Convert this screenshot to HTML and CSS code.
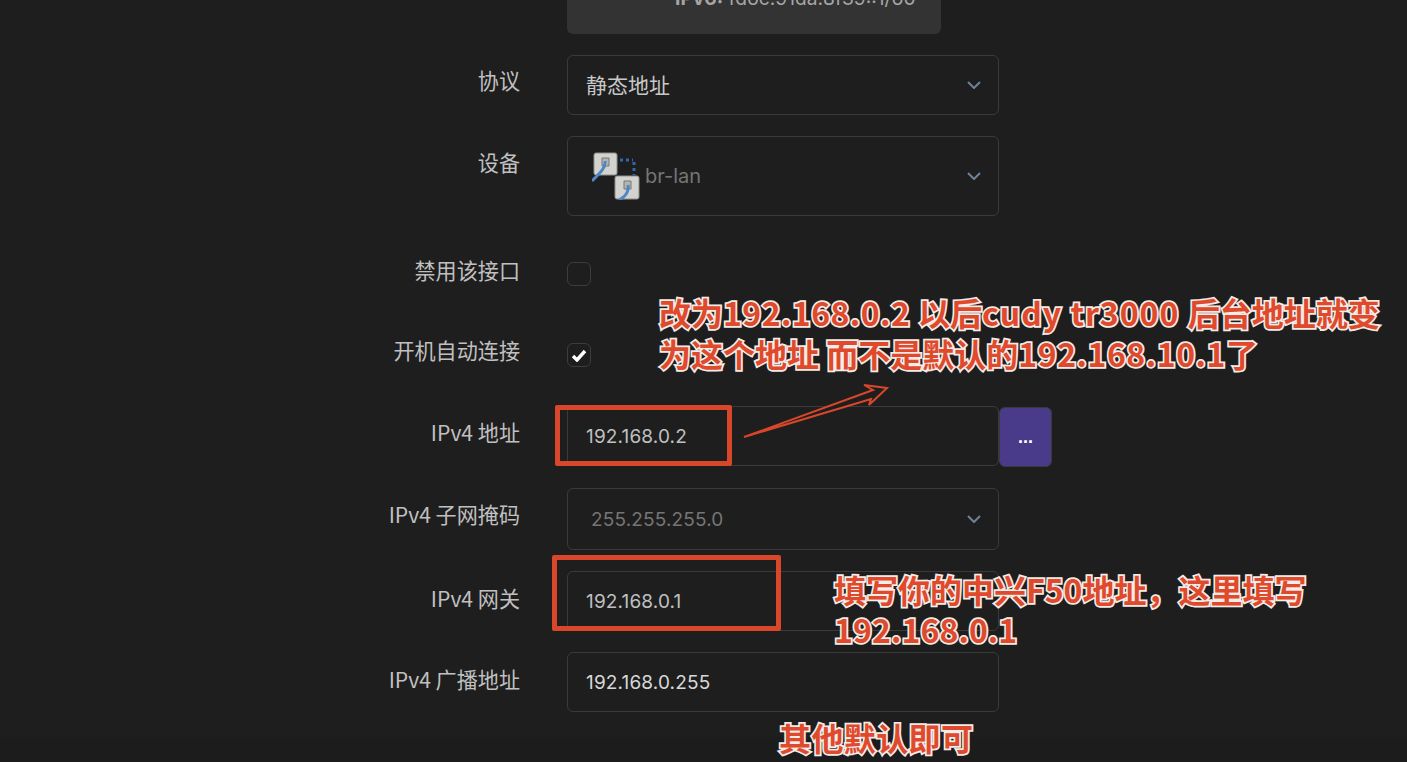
FILE: index.html
```html
<!DOCTYPE html>
<html lang="zh-CN">
  <head>
    <meta charset="UTF-8" />
    <meta name="viewport" content="width=device-width, initial-scale=1.0" />
    <title>接口设置</title>
    <link rel="stylesheet" href="styles.css">
  </head>
  <body>
    <div class="page">
      <div class="form">
        <div class="row rowInfo">
          <div class="infoBox"><span class="infoText"><b>IPv6:</b> fd6c:91da:8f39::1/60</span></div>
        </div>
        <div class="row rowProto">
          <label class="label">协议</label>
          <div class="field">
            <span class="value">静态地址</span>
            <svg class="chevron" viewBox="0 0 14 8"><path d="M1 1l6 6 6-6" /></svg>
          </div>
        </div>
        <div class="row rowDevice">
          <label class="label">设备</label>
          <div class="field fieldDevice">
            <svg class="devIcon" width="48" height="48" viewBox="0 0 48 48">
              <rect x="2" y="1" width="23" height="22" rx="2" fill="#d2d2ce" stroke="#8f8f8c" />
              <rect x="23" y="24" width="24" height="23" rx="2" fill="#d2d2ce" stroke="#8f8f8c" />
              <path d="M10 6h7v8h-7z" fill="#b5b5b2" stroke="#777" />
              <path d="M32 29h7v8h-7z" fill="#b5b5b2" stroke="#777" />
              <path d="M13 9c1 6-4 11-13 20" fill="none" stroke="#4f86c6" stroke-width="3" />
              <path d="M36 33c1 7-3 12-9 15" fill="none" stroke="#4f86c6" stroke-width="3" />
              <path d="M28 8h13M42 10v13" fill="none" stroke="#2f68b0" stroke-width="3" stroke-dasharray="3 3" />
            </svg>
            <span class="value valueMuted">br-lan</span>
            <svg class="chevron" viewBox="0 0 14 8"><path d="M1 1l6 6 6-6" /></svg>
          </div>
        </div>
        <div class="row rowCheck rowDisable">
          <label class="label">禁用该接口</label>
          <span class="check"></span>
        </div>
        <div class="row rowCheck rowAuto">
          <label class="label">开机自动连接</label>
          <span class="check">
            <svg width="16" height="13" viewBox="0 0 16 13"><path d="M2 7l4 4 8-9" fill="none" stroke="#fff" stroke-width="3.4" /></svg>
          </span>
        </div>
        <div class="row rowAddr">
          <label class="label">IPv4 地址</label>
          <div class="field"><span class="value valueNum">192.168.0.2</span></div>
          <button class="more">...</button>
        </div>
        <div class="row rowMask">
          <label class="label">IPv4 子网掩码</label>
          <div class="field">
            <span class="value valueNum valueMuted valueMask">255.255.255.0</span>
            <svg class="chevron" viewBox="0 0 14 8"><path d="M1 1l6 6 6-6" /></svg>
          </div>
        </div>
        <div class="row rowGate">
          <label class="label">IPv4 网关</label>
          <div class="field"><span class="value valueNum">192.168.0.1</span></div>
        </div>
        <div class="row rowBroad">
          <label class="label">IPv4 广播地址</label>
          <div class="field"><span class="value valueNum valueBright">192.168.0.255</span></div>
        </div>
      </div>
      <div class="footerBand"></div>

      <!-- annotations drawn over the screenshot -->
      <div class="mark markAddr"></div>
      <div class="mark markGate"></div>
      <svg class="arrow" width="150" height="62" viewBox="0 0 150 62">
        <path d="M4 57L133 10l-9-5 23 3-18 17 2-6L4 57z" fill="#1e1e1e" stroke="#d9472b" stroke-width="2" />
      </svg>
      <div class="note noteAddr">改为<span class="latin">192.168.0.2 </span>以后<span class="latinWide">cudy tr3000 </span>后台地址就变<br>为这个地址 而不是默认的<span class="latinMid">192.168.10.1</span>了</div>
      <div class="note noteGate">填写你的中兴F50地址，这里填写<br><span class="latinThin">192.168.0.1</span></div>
      <div class="note noteRest">其他默认即可</div>
    </div>
  </body>
</html>
```

FILE: styles.css
```css
html,
body {
  margin: 0;
  height: 100%;
  background: #1e1e1e;
}
.page {
  position: relative;
  height: 762px;
  overflow: hidden;
  font-family: "Noto Sans CJK SC", "Liberation Sans", sans-serif;
  color: #c4c4c4;
}
.form {
  display: flex;
  flex-direction: column;
}
.row {
  display: grid;
  grid-template-columns: 520px 432px 53px;
  column-gap: 0;
  align-items: start;
}
.label {
  font-size: 21.1px;
  line-height: 30px;
  text-align: right;
  color: #c0c0c0;
}
.field {
  grid-column: 2;
  margin-left: 47px;
  margin-right: -47px;
  box-sizing: border-box;
  height: 60px;
  border: 1px solid #3a3a3a;
  border-radius: 6px;
  padding: 0 17px 0 18px;
  display: flex;
  align-items: center;
  justify-content: space-between;
}
.value {
  font-size: 21px;
  line-height: 28px;
  margin-top: -2px;
  color: #c8c8c8;
}
.valueNum {
  font-family: "Inter", sans-serif;
  font-size: 19px;
  letter-spacing: 0.15px;
  color: #c0c0c0;
  margin-top: 1px;
}
.valueBright {
  color: #d8d8d8;
}
.valueMuted {
  color: #757575;
}
.valueMask {
  margin-left: 5px;
}
.chevron {
  width: 14px;
  height: 8px;
  fill: none;
  stroke: #6f8198;
  stroke-width: 2;
}
.rowInfo {
  height: 55px;
}
.infoBox {
  grid-column: 2;
  margin-left: 47px;
  width: 374px;
  height: 34px;
  background: #333333;
  border-radius: 0 0 6px 6px;
  overflow: hidden;
}
.infoText {
  display: block;
  margin: -13px 0 0 108px;
  font-family: "Inter", sans-serif;
  font-size: 19.2px;
  line-height: 22px;
  white-space: nowrap;
  color: #a6a6a6;
}
.rowProto {
  height: 81px;
}
.rowProto .label {
  margin-top: 10px;
}
.rowDevice {
  height: 126px;
}
.rowDevice .label {
  margin-top: 11px;
}
.fieldDevice {
  height: 80px;
  padding: 0 17px 0 24px;
}
.fieldDevice .value {
  font-family: "Inter", sans-serif;
  font-size: 20px;
  margin: 0 auto 0 5px;
}
.rowCheck .label {
  margin-top: -7px;
}
.rowDisable {
  height: 81px;
}
.rowAuto {
  height: 63px;
}
.rowAuto .label {
  margin-top: -8px;
}
.check {
  grid-column: 2;
  margin-left: 47px;
  box-sizing: border-box;
  width: 24px;
  height: 24px;
  border: 1px solid #3d3d3d;
  border-radius: 6px;
  display: flex;
  align-items: center;
  justify-content: center;
}
.rowAddr {
  height: 82px;
}
.rowAddr .label {
  margin-top: 11px;
}
.more {
  grid-column: 3;
  margin-left: 47px;
  margin-top: 1px;
  width: 53px;
  height: 60px;
  box-sizing: border-box;
  background: #4a3a8a;
  border: 1px solid #3a3a3a;
  border-radius: 6px;
  color: #fff;
  font-family: "Liberation Sans", sans-serif;
  font-size: 18px;
  font-weight: bold;
}
.rowMask {
  height: 83px;
}
.rowMask .field {
  height: 62px;
}
.rowMask .label {
  margin-top: 11px;
}
.rowGate {
  height: 81px;
}
.rowGate .label {
  margin-top: 12px;
}
.rowBroad .label {
  margin-top: 12px;
}
.footerBand {
  position: absolute;
  left: 0;
  right: 0;
  top: 737px;
  bottom: 0;
  background: #1c1c1c;
}
.mark {
  position: absolute;
  box-sizing: border-box;
  border: 5px solid #d9472b;
  border-radius: 2px;
}
.markAddr {
  left: 555px;
  top: 405px;
  width: 177px;
  height: 61px;
}
.markGate {
  left: 552px;
  top: 555px;
  width: 229px;
  height: 76px;
}
.arrow {
  position: absolute;
  left: 740px;
  top: 380px;
}
.note {
  position: absolute;
  font-weight: 700;
  font-size: 32px;
  line-height: 41px;
  color: #e04a2c;
  -webkit-text-stroke: 3.5px #f4ece8;
  paint-order: stroke fill;
  white-space: nowrap;
}
.latin {
  letter-spacing: 0.45px;
}
.latinWide {
  letter-spacing: 1px;
}
.latinMid {
  letter-spacing: 0.55px;
}
.latinThin {
  letter-spacing: 0.1px;
}
.noteAddr {
  left: 659px;
  top: 292px;
}
.noteGate {
  left: 834px;
  top: 569px;
  line-height: 40px;
}
.noteRest {
  left: 779px;
  top: 716px;
  line-height: 43px;
  letter-spacing: 0.4px;
}
```
